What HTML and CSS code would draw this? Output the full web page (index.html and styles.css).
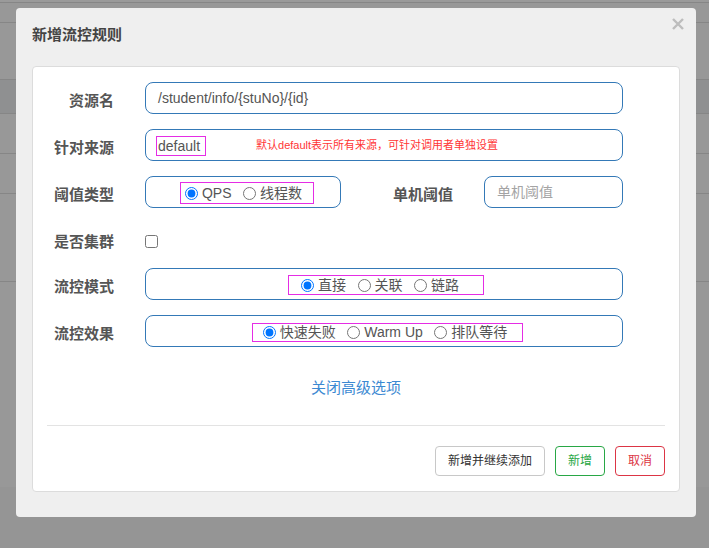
FILE: index.html
```html
<!DOCTYPE html>
<html lang="zh-CN">
<head>
<meta charset="utf-8">
<title>新增流控规则</title>
<link rel="stylesheet" href="styles.css">
</head>
<body>
<div class="page">
  <div class="backdrop">
    <div class="bg-row r1"></div>
    <div class="bg-row r2"></div>
    <div class="bg-row r3"></div>
    <div class="bg-row r4"></div>
    <div class="bg-row r5"></div>
    <div class="bg-row r6"></div>
    <div class="bg-row r7"></div>
    <div class="bg-rest"></div>
  </div>

  <div class="modal">
    <div class="modal-title">新增流控规则</div>
    <span class="close" aria-label="close">
      <svg width="12" height="12" viewBox="0 0 12 12"><path d="M1 1 L11 11 M11 1 L1 11" stroke="#bdbdbd" stroke-width="2.4" fill="none"/></svg>
    </span>

    <div class="card">
      <div class="form">
        <div class="row">
          <div class="label">资源名</div>
          <div class="field field-wide"><span class="value">/student/info/{stuNo}/{id}</span></div>
        </div>

        <div class="row">
          <div class="label">针对来源</div>
          <div class="field field-wide field-source">
            <span class="mark mark-default">default</span>
            <span class="note">默认default表示所有来源，可针对调用者单独设置</span>
          </div>
        </div>

        <div class="row">
          <div class="label">阈值类型</div>
          <div class="field field-type field-center shift-4">
            <div class="mark group g-type">
              <label class="opt"><input type="radio" name="grade" checked><span>QPS</span></label>
              <label class="opt"><input type="radio" name="grade"><span>线程数</span></label>
            </div>
          </div>
          <div class="label label-count">单机阈值</div>
          <div class="field field-count"><span class="placeholder">单机阈值</span></div>
        </div>

        <div class="row row-cluster">
          <div class="label">是否集群</div>
          <input class="check" type="checkbox">
        </div>

        <div class="row">
          <div class="label">流控模式</div>
          <div class="field field-wide field-center shift-2">
            <div class="mark group g-mode">
              <label class="opt"><input type="radio" name="strategy" checked><span>直接</span></label>
              <label class="opt"><input type="radio" name="strategy"><span>关联</span></label>
              <label class="opt"><input type="radio" name="strategy"><span>链路</span></label>
            </div>
          </div>
        </div>

        <div class="row">
          <div class="label">流控效果</div>
          <div class="field field-wide field-center shift-7">
            <div class="mark group g-effect">
              <label class="opt"><input type="radio" name="behavior" checked><span>快速失败</span></label>
              <label class="opt"><input type="radio" name="behavior"><span>Warm Up</span></label>
              <label class="opt"><input type="radio" name="behavior"><span>排队等待</span></label>
            </div>
          </div>
        </div>
      </div>

      <div class="advanced">关闭高级选项</div>
      <div class="divider"></div>

      <div class="actions">
        <button class="btn">新增并继续添加</button>
        <button class="btn btn-green">新增</button>
        <button class="btn btn-red">取消</button>
      </div>
    </div>
  </div>
</div>
</body>
</html>
```

FILE: styles.css
```css
html, body {
  margin: 0;
  padding: 0;
}

body {
  background: #959595;
  font-family: "Liberation Sans", "Noto Sans CJK SC", sans-serif;
  color: #555;
}

.page {
  position: relative;
  width: 709px;
  height: 548px;
  overflow: hidden;
}

/* dimmed table behind the dialog */
.backdrop {
  display: flex;
  flex-direction: column;
}

.bg-row {
  border-bottom: 1px solid #868686;
  background: #989898;
}

.r1 { height: 2px; background: #9a9a9a; }
.r2 { height: 19px; }
.r3 { height: 56px; }
.r4 { height: 33px; background: #8f9091; }
.r5 { height: 39px; }
.r6 { height: 39px; }
.r7 { height: 87px; }
.bg-rest { height: 205px; background: #989898; }

/* dialog */
.modal {
  position: absolute;
  left: 16px;
  top: 8px;
  width: 680px;
  box-sizing: border-box;
  background: #efefef;
  border-radius: 4px;
  padding: 17px 16px 25px;
}

.modal-title {
  font-size: 15px;
  line-height: 20px;
  font-weight: 700;
  color: #444;
}

.close {
  position: absolute;
  right: 12px;
  top: 10px;
  width: 12px;
  height: 12px;
  display: block;
}

.close svg { display: block; }

.card {
  margin-top: 21px;
  background: #fff;
  border: 1px solid #dcdcdc;
  border-radius: 4px;
  padding: 15px 14px 15px;
}

.form {
  display: flex;
  flex-direction: column;
  gap: 15px;
}

.row {
  display: flex;
  align-items: center;
  height: 32px;
}

.row-cluster {
  height: 30px;
  box-sizing: border-box;
  padding-top: 6px;
}

.label {
  width: 67px;
  flex: none;
  text-align: right;
  margin-right: 31px;
  font-size: 15px;
  line-height: 20px;
  font-weight: 700;
  color: #555;
  padding-top: 6px;
}

.row-cluster .label {
  padding-top: 2px;
}

.label-count {
  width: 112px;
}

.field {
  height: 32px;
  box-sizing: border-box;
  border: 1px solid #3479b7;
  border-radius: 8px;
  display: flex;
  align-items: center;
  padding: 0 12px;
  font-size: 14px;
  color: #555;
  flex: none;
}

.field-wide { width: 478px; }
.field-type { width: 196px; }
.field-count { width: 139px; }

.field-source { padding-left: 10px; }

.field-center {
  justify-content: center;
  padding: 0;
}

.shift-4 { padding-left: 8px; }
.shift-2 { padding-left: 4px; }
.shift-7 { padding-left: 7px; }

.value { line-height: 18px; }

.placeholder {
  color: #a4a4a4;
  line-height: 18px;
}

.mark {
  border: 1px solid #e52de5;
  box-sizing: border-box;
}

.mark-default {
  height: 20px;
  padding: 0 5px 0 1px;
  line-height: 18px;
  margin-top: 1px;
}

.note {
  margin-left: 50px;
  font-size: 11px;
  line-height: 14px;
  color: #ff3535;
  margin-top: -1px;
}

.group {
  display: flex;
  align-items: center;
  gap: 11.5px;
}

.g-type { height: 22px; padding: 0 11px 0 4px; margin-top: 2px; }
.g-mode { height: 20px; padding: 0 24px 0 12px; margin-top: 2px; }
.g-effect { height: 19px; padding: 0 15px 0 10px; margin-top: 2px; }

.opt {
  display: flex;
  align-items: center;
  font-size: 14px;
  line-height: 18px;
  color: #555;
}

.opt input {
  width: 13px;
  height: 13px;
  margin: 0 4px 0 0;
  flex: none;
}

.check {
  width: 13px;
  height: 13px;
  margin: 0 0 0 0;
}

.advanced {
  margin-top: 30px;
  text-align: center;
  font-size: 15px;
  line-height: 22px;
  color: #3c89d2;
}

.divider {
  margin-top: 26px;
  border-top: 1px solid #e3e3e3;
}

.actions {
  margin-top: 20px;
  display: flex;
  justify-content: flex-end;
  gap: 10px;
}

.btn {
  height: 30px;
  padding: 0 12px;
  border: 1px solid #c8c8c8;
  border-radius: 4px;
  background: #fff;
  color: #333;
  font-family: "Liberation Sans", "Noto Sans CJK SC", sans-serif;
  font-size: 12px;
  line-height: 28px;
}

.btn-green {
  border-color: #28a745;
  color: #28a745;
}

.btn-red {
  border-color: #dc3545;
  color: #dc3545;
}
```
